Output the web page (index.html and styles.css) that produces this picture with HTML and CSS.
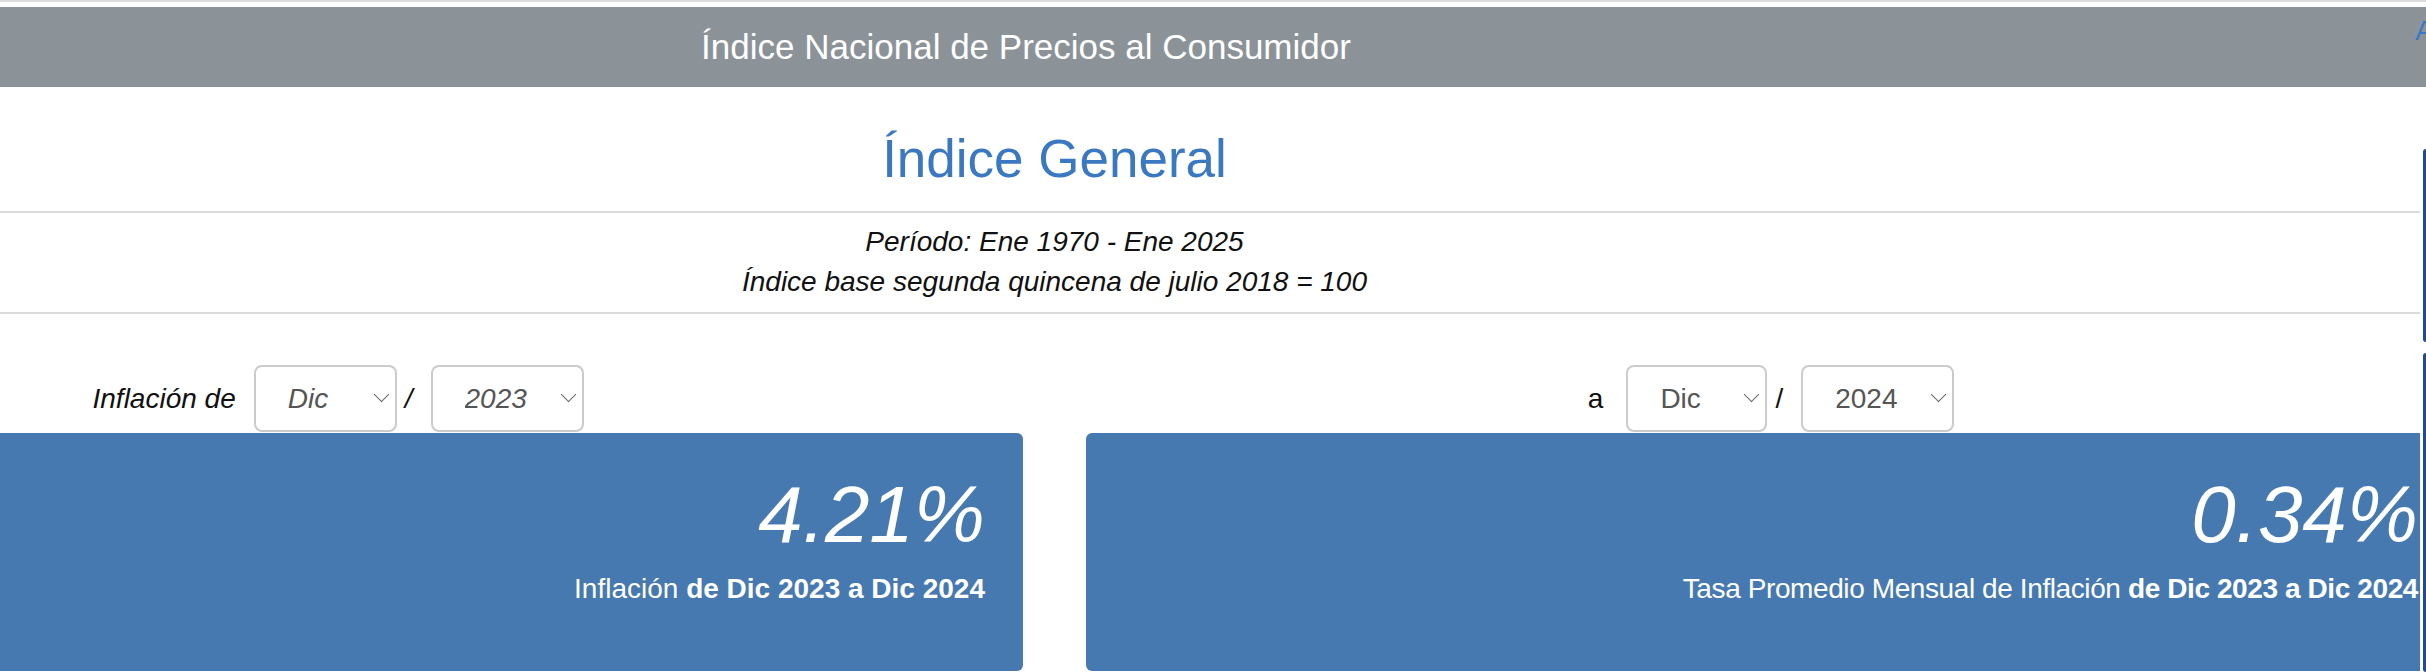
FILE: index.html
```html
<!DOCTYPE html>
<html>
  <head>
    <title>INPC - Índice General</title>
    <link rel="stylesheet" href="styles.css">
  </head>
  <body>
    <div class="topline"></div>

    <header class="site-header">
      <div class="site-title">Índice Nacional de Precios al Consumidor</div>
      <a class="font-toggle" href="#">A</a>
    </header>

    <div class="content">
      <div class="viewport">
        <div class="page">
          <h1 class="index-title">Índice General</h1>

          <div class="period">
            <p>Período: Ene 1970 - Ene 2025</p>
            <p>Índice base segunda quincena de julio 2018 = 100</p>
          </div>

          <div class="calc">
            <div class="calc-col">
              <div class="picker">
                <label class="picker-label italic">Inflación de</label>
                <span class="select-wrap month-wide">
                  <select class="sel italic"><option>Dic</option></select>
                </span>
                <span class="slash italic">/</span>
                <span class="select-wrap year">
                  <select class="sel italic"><option>2023</option></select>
                </span>
              </div>
              <div class="card">
                <div class="card-value">4.21%</div>
                <div class="card-text">Inflación <b>de Dic 2023 a Dic 2024</b></div>
              </div>
            </div>

            <div class="calc-col">
              <div class="picker">
                <label class="picker-label to-label">a</label>
                <span class="select-wrap month">
                  <select class="sel"><option>Dic</option></select>
                </span>
                <span class="slash">/</span>
                <span class="select-wrap year">
                  <select class="sel"><option>2024</option></select>
                </span>
              </div>
              <div class="card">
                <div class="card-value">0.34%</div>
                <div class="card-text narrow">Tasa Promedio Mensual de Inflación <b>de Dic 2023 a Dic 2024</b></div>
              </div>
            </div>
          </div>
        </div>
      </div>

      <div class="rail">
        <span class="rail-tab"></span>
        <span class="rail-tab rail-tab-long"></span>
      </div>
    </div>
  </body>
</html>
```

FILE: styles.css
```css
:root {
  --header-bg: #8b9399;
  --line-color: #dcdcdc;
  --title-blue: #3b78c2;
  --card-blue: #4779b1;
  --select-border: #cbcbcb;
  --select-text: #555;
  --rail-color: #234a8f;
}

html,
body {
  margin: 0;
  padding: 0;
  height: 100%;
  overflow: hidden;
  background: #fff;
  font-family: "Liberation Sans", Arial, sans-serif;
  color: #111;
}

.italic {
  font-style: italic;
}

.topline {
  height: 2px;
  background-color: var(--line-color);
  margin-bottom: 5px;
}

.site-header {
  position: relative;
  height: 80px;
  background-color: var(--header-bg);
  display: flex;
  justify-content: center;
  align-items: center;
  padding-right: 374px;
}

.site-title {
  color: #fff;
  font-size: 35px;
  line-height: 80px;
}

.font-toggle {
  position: absolute;
  top: 8px;
  right: -8px;
  color: var(--title-blue);
  font-size: 28px;
  text-decoration: none;
}

.content {
  display: flex;
  height: calc(100% - 87px);
}

.viewport {
  flex: 1;
  overflow: hidden;
}

.page {
  width: 2803px;
  margin-left: -347px;
}

.index-title {
  margin: 0;
  padding: 43px 0 23px;
  font-size: 53px;
  line-height: 58px;
  font-weight: normal;
  text-align: center;
  color: var(--title-blue);
  border-bottom: 2px solid var(--line-color);
}

.period {
  padding: 9px 0 10px;
  text-align: center;
  border-bottom: 2px solid var(--line-color);
}

.period p {
  margin: 0;
  font-size: 28px;
  line-height: 40px;
  font-style: italic;
}

.calc {
  display: flex;
  gap: 63px;
}

.calc-col {
  flex: 1;
  display: flex;
  flex-direction: column;
}

.picker {
  display: flex;
  justify-content: center;
  align-items: center;
  padding: 51px 0 1px;
  font-size: 28px;
}

.picker-label {
  margin-right: 18px;
}

.to-label {
  margin-right: 23px;
}

.slash {
  margin: 0 18px 0 8px;
}

.select-wrap {
  position: relative;
  display: inline-block;
  width: 143px;
}

.select-wrap.month {
  width: 141px;
}

.select-wrap.year {
  width: 153px;
}

.select-wrap::after {
  content: "";
  position: absolute;
  top: 50%;
  right: 10px;
  width: 10px;
  height: 10px;
  margin-top: -10px;
  border-right: 1.5px solid #666;
  border-bottom: 1.5px solid #666;
  transform: rotate(45deg);
  pointer-events: none;
}

.sel {
  appearance: none;
  -webkit-appearance: none;
  width: 100%;
  height: 67px;
  padding: 0 0 0 32px;
  border: 2px solid var(--select-border);
  border-radius: 8px;
  background-color: #fff;
  color: var(--select-text);
  font-family: "Liberation Sans", Arial, sans-serif;
  font-size: 28px;
}

.card {
  height: 238px;
  box-sizing: border-box;
  padding: 42px 38px 0;
  border-radius: 6px;
  background-color: var(--card-blue);
  color: #fff;
  text-align: right;
}

.card-value {
  font-size: 80px;
  line-height: 80px;
  font-style: italic;
}

.card-text {
  margin-top: 14px;
  font-size: 28px;
  line-height: 40px;
}

.card-text.narrow {
  letter-spacing: -0.4px;
}

.rail {
  width: 6px;
  display: flex;
  flex-direction: column;
  align-items: flex-end;
  gap: 11px;
  padding-top: 62px;
}

.rail-tab {
  width: 3px;
  height: 193px;
  background-color: var(--rail-color);
  border-radius: 3px 0 0 3px;
}

.rail-tab-long {
  flex: 1;
}
```
